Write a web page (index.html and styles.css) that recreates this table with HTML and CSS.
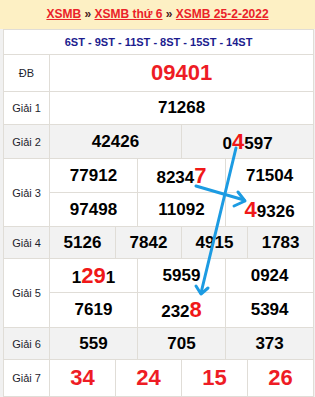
FILE: index.html
```html
<!DOCTYPE html>
<html lang="vi">
<head>
<meta charset="utf-8">
<title>XSMB 25-2-2022</title>
<link rel="stylesheet" href="styles.css">
</head>
<body>
<div class="page">
  <div class="crumbs">
    <a href="#">XSMB</a> <span class="sep">»</span> <a href="#">XSMB thứ 6</a> <span class="sep">»</span> <a href="#">XSMB 25-2-2022</a>
  </div>
  <div class="wrap">
    <table class="kq">
      <colgroup>
        <col class="c-label">
        <col class="c"><col class="c"><col class="c"><col class="c"><col class="c"><col class="c">
        <col class="c"><col class="c"><col class="c"><col class="c"><col class="c"><col class="c">
      </colgroup>
      <tr class="r-st"><td colspan="13" class="st">6ST - 9ST - 11ST - 8ST - 15ST - 14ST</td></tr>
      <tr class="r-db"><td class="lbl">ĐB</td><td colspan="12" class="db">09401</td></tr>
      <tr class="r-g1"><td class="lbl">Giải 1</td><td colspan="12" class="num">71268</td></tr>
      <tr class="r-g2 gray"><td class="lbl">Giải 2</td><td colspan="6" class="num">42426</td><td colspan="6" class="num">0<b class="hl">4</b>597</td></tr>
      <tr class="r-g3"><td class="lbl" rowspan="2">Giải 3</td><td colspan="4" class="num">77912</td><td colspan="4" class="num">8234<b class="hl">7</b></td><td colspan="4" class="num">71504</td></tr>
      <tr class="r-g3"><td colspan="4" class="num">97498</td><td colspan="4" class="num">11092</td><td colspan="4" class="num"><b class="hl">4</b>9326</td></tr>
      <tr class="r-g4 gray"><td class="lbl">Giải 4</td><td colspan="3" class="num">5126</td><td colspan="3" class="num">7842</td><td colspan="3" class="num">4915</td><td colspan="3" class="num">1783</td></tr>
      <tr class="r-g5"><td class="lbl" rowspan="2">Giải 5</td><td colspan="4" class="num">1<b class="hl">29</b>1</td><td colspan="4" class="num">5959</td><td colspan="4" class="num">0924</td></tr>
      <tr class="r-g5b"><td colspan="4" class="num">7619</td><td colspan="4" class="num">232<b class="hl">8</b></td><td colspan="4" class="num">5394</td></tr>
      <tr class="r-g6 gray"><td class="lbl">Giải 6</td><td colspan="4" class="num">559</td><td colspan="4" class="num">705</td><td colspan="4" class="num">373</td></tr>
      <tr class="r-g7"><td class="lbl">Giải 7</td><td colspan="3" class="g7">34</td><td colspan="3" class="g7">24</td><td colspan="3" class="g7">15</td><td colspan="3" class="g7">26</td></tr>
    </table>
  </div>
  <svg class="arrows" width="315" height="397" viewBox="0 0 315 397">
    <g stroke="#1c9be2" stroke-width="3" fill="none" stroke-linecap="round" stroke-linejoin="round">
      <path d="M236 148 L201 293"/>
      <path d="M196 286 L201 294 L208 288"/>
      <path d="M196 186 L244 200"/>
      <path d="M238 192 L245 201 L234 206"/>
    </g>
  </svg>
</div>
</body>
</html>
```
FILE: styles.css
```css
html, body {
  margin: 0;
  padding: 0;
  background: #ffffff;
}
.page {
  position: relative;
  width: 315px;
  height: 397px;
  font-family: "Liberation Sans", Arial, sans-serif;
  overflow: hidden;
}
.crumbs {
  height: 29px;
  line-height: 28px;
  background: #fdf0c4;
  text-align: center;
  font-size: 12px;
  font-weight: bold;
  color: #3a1a1a;
}
.crumbs a {
  color: #ea2229;
  text-decoration: underline;
}
.crumbs .sep {
  color: #4a2020;
}
.wrap {
  background: #f1f1f1;
  padding: 0 2px 0 3px;
  border-bottom: 3px solid #f7a04c;
}
.kq {
  width: 310px;
  border-collapse: collapse;
  table-layout: fixed;
  background: #ffffff;
}
.c-label { width: 46px; }
.c { width: 22px; }
.kq td {
  border: 1px solid #e0ddd7;
  padding: 0;
  text-align: center;
  vertical-align: middle;
}
.gray td { background: #f2f2f2; }
.r-st td { height: 24px; }
.st {
  font-size: 11px;
  font-weight: bold;
  color: #1c1c8e;
  padding-top: 2px;
}
.r-db td { height: 36px; }
.r-g1 td { height: 32px; }
.r-g2 td { height: 33px; }
.r-g3 td { height: 33px; }
.r-g4 td { height: 31px; }
.r-g5 td { height: 33px; }
.r-g5b td { height: 34px; }
.r-g6 td { height: 31px; }
.r-g7 td { height: 36px; }
.lbl {
  font-size: 11px;
  color: #1e1e2e;
}
.num {
  font-size: 17px;
  font-weight: bold;
  color: #000000;
}
.hl {
  font-size: 22px;
  color: #f01818;
}
.db {
  font-size: 22px;
  font-weight: bold;
  color: #ee1c25;
}
.g7 {
  font-size: 22px;
  font-weight: bold;
  color: #ee1c25;
}
.arrows {
  position: absolute;
  left: 0;
  top: 0;
  pointer-events: none;
}
```
